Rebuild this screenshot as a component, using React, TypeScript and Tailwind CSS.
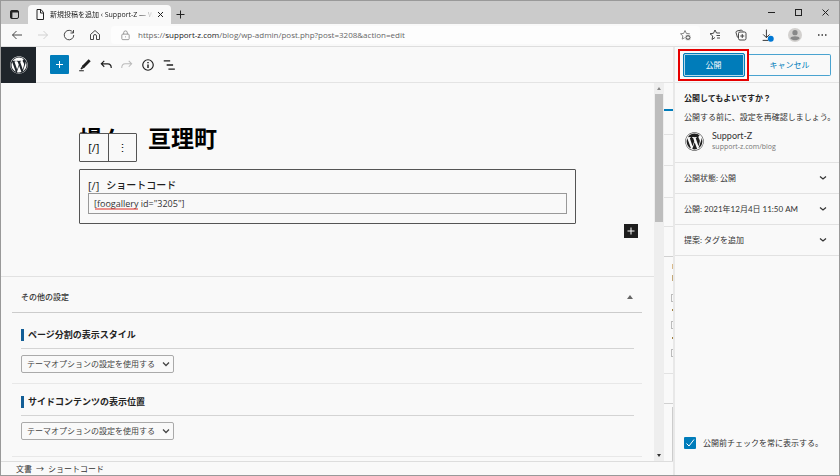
import React from "react";
import { FaWordpress } from "react-icons/fa";

const FONT = "font-['Open_Sans','Noto_Sans_CJK_JP',sans-serif]";

function Ico({ children, className = "size-3", vb = "0 0 24 24", sw = 1.8 }: { children: React.ReactNode; className?: string; vb?: string; sw?: number }) {
  return (
    <svg viewBox={vb} className={className} fill="none" stroke="currentColor" strokeWidth={sw} aria-hidden="true">
      {children}
    </svg>
  );
}

const STAR = "M12 3l2.7 5.9 6.3.7-4.7 4.3 1.3 6.3L12 17l-5.6 3.2 1.3-6.3L3 9.6l6.3-.7z";

function TitleBar() {
  return (
    <div className="flex h-[23px] shrink-0 items-end bg-[#cbcbcb] text-[#222]">
      <button aria-label="タブ操作" className="flex h-5 w-[27px] items-center justify-center">
        <Ico className="size-[9px]" vb="0 0 18 18" sw={2}>
          <rect x="1" y="1" width="16" height="16" rx="3" />
          <path d="M1 3h16M3 1v16" strokeWidth="3.5" />
        </Ico>
      </button>
      <div className="flex h-[19px] w-[143px] items-center rounded-t bg-[#f9f9f9] pr-[6px] pl-[8px]">
        <Ico className="h-[11px] w-[8px] shrink-0" vb="0 0 16 22" sw={2}>
          <path d="M2 1h8l5 6v14H2zM9 1v7h6" />
        </Ico>
        <span className="ml-[6px] w-[103px] overflow-hidden text-[7px] leading-3 whitespace-nowrap [mask-image:linear-gradient(to_right,black_88%,transparent)]">
          新規投稿を追加 ‹ Support-Z — W
        </span>
        <button aria-label="タブを閉じる" className="ml-1 shrink-0">
          <Ico className="size-[7px]" vb="0 0 14 14" sw={2}><path d="M2 2l10 10M12 2L2 12" /></Ico>
        </button>
      </div>
      <button aria-label="新しいタブ" className="mb-[5px] ml-[5px]">
        <Ico className="size-[9px]" vb="0 0 18 18" sw={2}><path d="M9 1v16M1 9h16" /></Ico>
      </button>
      <div className="mb-2 ml-auto flex items-center gap-5 pr-[10px]">
        <button aria-label="最小化"><Ico className="size-[7px]" vb="0 0 14 14" sw={2}><path d="M0 7h14" /></Ico></button>
        <button aria-label="最大化"><Ico className="size-[7px]" vb="0 0 14 14" sw={2}><rect x="1" y="1" width="12" height="12" /></Ico></button>
        <button aria-label="閉じる"><Ico className="size-[7px]" vb="0 0 14 14" sw={2}><path d="M1 1l12 12M13 1L1 13" /></Ico></button>
      </div>
    </div>
  );
}

function AddressBar() {
  return (
    <div className="flex h-[23px] shrink-0 items-center border-b border-[#dedede] bg-[#f9f9f9] pr-[11px] pl-[10px] text-[#333]">
      <div className="flex w-[100px] shrink-0 items-center gap-[14px]">
        <button aria-label="戻る"><Ico><path d="M22 12H3M11 4l-8 8 8 8" /></Ico></button>
        <button aria-label="進む" className="text-[#ccc]"><Ico><path d="M2 12h19M13 4l8 8-8 8" /></Ico></button>
        <button aria-label="更新"><Ico><path d="M20 7a9.500 9.500 0 1 0 1.500 5M21 2v6h-6" /></Ico></button>
        <button aria-label="ホーム"><Ico><path d="M3 11l9-8 9 8v10h-6v-7a3 3 0 0 0-6 0v7H3z" /></Ico></button>
      </div>
      <div className="flex h-[18px] min-w-0 flex-1 items-center rounded-[3px] bg-white/60 px-[9px]">
        <Ico className="size-[11px] shrink-0 text-[#888]"><rect x="4" y="9" width="16" height="12" rx="2" /><path d="M8 9V6a4 4 0 0 1 8 0v3M12 14v2" /></Ico>
        <div className="ml-[7px] flex-1 text-[8px] leading-3 whitespace-nowrap text-[#666]">
          https://<span className="text-[#222]">support-z.com</span>/blog/wp-admin/post.php?post=3208&amp;action=edit
        </div>
        <button aria-label="お気に入りに追加" className="text-[#777]">
          <Ico><path d={STAR} /><circle cx="18" cy="17" r="6" fill="#666" stroke="#f9f9f9" /><path d="M15 17h6M18 14v6" stroke="#fff" /></Ico>
        </button>
      </div>
      <div className="ml-[9px] flex items-center gap-[14px]">
        <button aria-label="お気に入り"><Ico><path d="M12 17l-6 4 1.500-7L2 9.500l7-1L12 2l3 6h7M15 13h7M16 18h6" /></Ico></button>
        <button aria-label="コレクション"><Ico><path d="M5 17l-3-10a3 3 0 0 1 2-3l9-2 3 3" /><rect x="7" y="6" width="15" height="16" rx="3" /><path d="M14.500 10v8M10.500 14h8" /></Ico></button>
        <button aria-label="ダウンロード"><Ico className="size-[13px]"><path d="M10 1v15M4 10l6 6 6-6M3 21h10" /><circle cx="18" cy="18" r="5.500" fill="#0078d4" stroke="none" /></Ico></button>
        <button aria-label="プロファイル"><Ico className="size-[14px]"><circle cx="12" cy="12" r="12" fill="#d2d0ce" stroke="none" /><circle cx="12" cy="8" r="4.500" fill="#888" stroke="none" /><path d="M4 18c0-5 16-5 16 0-4 4-12 4-16 0z" fill="#888" stroke="none" /></Ico></button>
        <button aria-label="その他"><Ico><path d="M4 12h3M11 12h3M18 12h3" strokeWidth="3" /></Ico></button>
      </div>
    </div>
  );
}

function EditorHeader() {
  return (
    <header className="flex h-9 shrink-0 items-center border-b border-[#e4e4e4]">
      <a href="#" aria-label="投稿一覧" className="flex h-9 w-[35px] items-center justify-center bg-[#1f252b] text-white">
        <FaWordpress className="size-[18px]" />
      </a>
      <div className="ml-[14px] flex items-center gap-[7px] text-[#1e1e1e]">
        <button aria-label="ブロックを追加" className="mr-[2px] flex size-[19px] items-center justify-center rounded-[1px] bg-[#007cba] text-white">
          <Ico className="size-[9px]" vb="0 0 18 18" sw={2}><path d="M9 2v14M2 9h14" /></Ico>
        </button>
        <button aria-label="ツール"><Ico className="size-[14px]"><path d="M20 4L9 15" strokeWidth="5" /><path d="M8 14l-3 5 5-3zM2 22h8" /></Ico></button>
        <button aria-label="元に戻す"><Ico className="size-[14px]"><path d="M9 5l-5 5 5 5M4 10h11c4 0 6 2 6 7" strokeWidth="2" /></Ico></button>
        <button aria-label="やり直す" className="text-[#bbb]"><Ico className="size-[14px]"><path d="M15 5l5 5-5 5M20 10H9c-4 0-6 2-6 7" /></Ico></button>
        <button aria-label="詳細"><Ico className="size-[14px]"><circle cx="12" cy="12" r="9" strokeWidth="2" /><path d="M12 11v6M12 7v2" strokeWidth="2.500" /></Ico></button>
        <button aria-label="リスト表示"><Ico className="size-[14px]"><path d="M3 5h11M8 12h11M11 19h11" strokeWidth="2.200" /></Ico></button>
      </div>
    </header>
  );
}

function BlockEditor() {
  return (
    <section className="h-[194px] shrink-0 border-b border-[#e2e2e2] pt-[39px] pr-[78px] pl-[78px]">
      <div className="relative">
        <h1 className="text-[23px] leading-[32px] font-bold text-black">場々　亘理町</h1>
        <div className="absolute top-[11px] left-0 flex h-[29px] w-[58px] divide-x divide-[#555] rounded-[1px] border border-[#555] bg-[#f9f9f9] text-[11px] leading-3">
          <button className="flex-1">[/]</button>
          <button aria-label="オプション" className="flex-1">⋮</button>
        </div>
      </div>
      <div className="mt-[15px] h-[55px] rounded-[1px] border border-[#555] px-[8px] pt-[8px]">
        <label htmlFor="shortcode" className="flex h-[15px] items-center gap-[7px] text-[10px] leading-[15px] font-medium text-[#1e1e1e]">
          <span className="text-[11px]">[/]</span>ショートコード
        </label>
        <div className="relative">
          <input id="shortcode" defaultValue={'[foogallery id="3205"]'} spellCheck={false} className="block h-[21px] w-full border border-[#999] bg-transparent px-[5px] text-[9px] text-[#333]" />
          <svg viewBox="0 0 43 2" className="absolute bottom-[4px] left-[7px] h-[2px] w-[43px]" aria-hidden="true"><path d="M0 1h43" stroke="#e02b20" /></svg>
        </div>
      </div>
      <button aria-label="ブロックを追加" className="-mr-[62px] ml-auto flex size-[14px] items-center justify-center bg-[#1e1e1e] text-white">
        <Ico className="size-[8px]" vb="0 0 16 16" sw={2}><path d="M8 1v14M1 8h14" /></Ico>
      </button>
    </section>
  );
}

function Setting({ id, label }: { id: string; label: string }) {
  return (
    <div className="h-[67px] border-b border-[#e8e8e8] pt-[12px] pr-[8px] pl-[9px] last:h-[73px]">
      <label htmlFor={id} className="flex h-[20px] items-start border-b border-[#d4d4d4] text-[9px] leading-3 font-bold text-[#222]">
        <span className="mr-[4px] h-3 w-[3px] bg-[#135e96]" />
        {label}
      </label>
      <div className="relative mt-[6px] w-[153px]">
        <select id={id} className="block h-[18px] w-full appearance-none rounded-[2px] border border-[#aaa] bg-transparent px-[5px] text-[8px] text-[#444]">
          <option>テーマオプションの設定を使用する</option>
        </select>
        <Ico className="pointer-events-none absolute top-[5px] right-[4px] size-[8px] text-[#444]" vb="0 0 16 16" sw={2.5}><path d="M2 5l6 6 6-6" /></Ico>
      </div>
    </div>
  );
}

function MetaBoxes() {
  return (
    <section className="min-h-0 flex-1 overflow-hidden pr-[12px] pl-[11px]">
      <button className="flex h-9 w-full items-center justify-between border-b border-[#ccc] pt-[5px] pr-[9px] pl-[9px] text-[8px] font-medium text-[#333]">
        その他の設定
        <span className="border-x-[3px] border-b-[4px] border-transparent border-b-[#666]" />
      </button>
      <div className="pt-[4px]">
        <Setting id="pagination-style" label="ページ分割の表示スタイル" />
        <Setting id="side-content" label="サイドコンテンツの表示位置" />
      </div>
    </section>
  );
}

function ScrollBar() {
  return (
    <div className="flex w-[10px] shrink-0 flex-col items-center bg-[#eee]">
      <span className="my-[4px] border-x-[2px] border-b-[3px] border-transparent border-b-[#888]" />
      <span className="h-[128px] w-2 bg-[#bdbdbd]" />
      <span className="mt-auto mb-[4px] border-x-[2px] border-t-[3px] border-transparent border-t-[#333]" />
    </div>
  );
}

function SidebarEdge() {
  return (
    <div className="w-[9px] shrink-0">
      <div className="h-[28px] border-b-2 border-[#007cba]" />
      <div className="h-[24px] border-b border-[#e2e2e2]" />
      <div className="h-[31px] border-b border-[#e2e2e2]" />
      <div className="h-[32px] border-b border-[#e2e2e2]" />
      <div className="h-[29px] border-b border-[#e2e2e2]" />
      <div className="h-[30px] border-b border-[#d0d0d0]" />
      <div className="flex h-[117px] flex-col items-end border-b border-[#e2e2e2] pt-[7px]">
        <span className="h-[5px] w-px bg-[#d9b98a]" />
        <span className="mt-[6px] h-[6px] w-px bg-[#c4a878]" />
        <span className="mt-[13px] h-2 w-[2px] border-y border-l border-[#bbb]" />
        <span className="mt-[7px] h-[2px] w-px bg-[#a08040]" />
        <span className="mt-[10px] h-2 w-[2px] border-y border-l border-[#bbb]" />
        <span className="mt-[8px] h-[2px] w-px bg-[#a08040]" />
        <span className="mt-[10px] h-2 w-[2px] border-y border-l border-[#bbb]" />
      </div>
      <div className="h-[30px] border-b border-[#d0d0d0]" />
      <div className="mt-[3px] ml-auto h-[54px] w-px bg-[#ccc]" />
    </div>
  );
}

function Row({ children }: { children: React.ReactNode }) {
  return (
    <button className="flex h-[31px] w-full shrink-0 items-center justify-between border-b border-[#e2e2e2] pr-[12px] pl-[9px] text-[8px] text-[#333]">
      {children}
      <Ico className="size-[8px]" vb="0 0 16 16" sw={2.5}><path d="M2 5l6 5 6-5" /></Ico>
    </button>
  );
}

function PublishPanel() {
  return (
    <aside className="flex w-[166px] shrink-0 flex-col border-l-2 border-[#e8e8e8] bg-[#f9f9f9] font-['Lato','Noto_Sans_CJK_JP',sans-serif]">
      <div className="flex h-9 shrink-0 items-center border-b border-[#e4e4e4] pr-[8px] pl-[3px]">
        <div className="flex h-8 w-[71px] shrink-0 items-center justify-center border-2 border-[#e60000]">
          <button className="h-[24px] w-[62px] rounded-[2px] border border-[#007cba] bg-[#007cba] text-[8px] text-white inset-ring inset-ring-white/70">公開</button>
        </div>
        <button className="h-[22px] flex-1 rounded-r-[2px] border border-l-0 border-[#4aa3d0] text-[8px] text-[#007cba]">キャンセル</button>
      </div>
      <div className="h-[80px] shrink-0 border-b border-[#e2e2e2] pt-[8px] pl-[9px] whitespace-nowrap text-[#333]">
        <h2 className="text-[8px] leading-[14px] font-bold text-[#222]">公開してもよいですか？</h2>
        <p className="mt-[5px] text-[8px] leading-[14px]">公開する前に、設定を再確認しましょう。</p>
        <div className="mt-[6px] flex items-center gap-[8px] pl-[1px]">
          <FaWordpress className="size-[19px] text-[#1e1e1e]" />
          <div>
            <div className="text-[9px] leading-[12px]">Support-Z</div>
            <div className="font-['Open_Sans',sans-serif] text-[7px] leading-[10px] text-[#777]">support-z.com/blog</div>
          </div>
        </div>
      </div>
      <Row>公開状態: 公開</Row>
      <Row>公開: 2021年12月4日 11:50 AM</Row>
      <Row>提案: タグを追加</Row>
      <label className="mt-auto mb-[26px] flex items-center gap-[7px] pl-[9px] text-[8px] leading-3 whitespace-nowrap text-[#333]">
        <span className="relative size-3">
          <input type="checkbox" defaultChecked className="block size-3 appearance-none rounded-[1px] bg-[#007cba]" />
          <Ico className="pointer-events-none absolute inset-0 size-3 text-white" sw={2}><path d="M5 13l5 5L20 5" /></Ico>
        </span>
        公開前チェックを常に表示する。
      </label>
    </aside>
  );
}

export default function App() {
  return (
    <div className={`flex h-screen flex-col overflow-hidden border border-[#999] bg-[#f9f9f9] ${FONT}`}>
      <TitleBar />
      <AddressBar />
      <main className="flex min-h-0 flex-1">
        <div className="flex min-w-0 flex-1 flex-col">
          <EditorHeader />
          <div className="flex min-h-0 flex-1">
            <div className="flex min-w-0 flex-1 flex-col">
              <BlockEditor />
              <MetaBoxes />
            </div>
            <ScrollBar />
            <SidebarEdge />
          </div>
          <footer className="flex h-[14px] shrink-0 items-center gap-[4px] border-t border-[#ddd] pl-[15px] text-[8px] leading-3 text-[#333]">
            <span>文書</span><span>→</span><span>ショートコード</span>
          </footer>
        </div>
        <PublishPanel />
      </main>
    </div>
  );
}
